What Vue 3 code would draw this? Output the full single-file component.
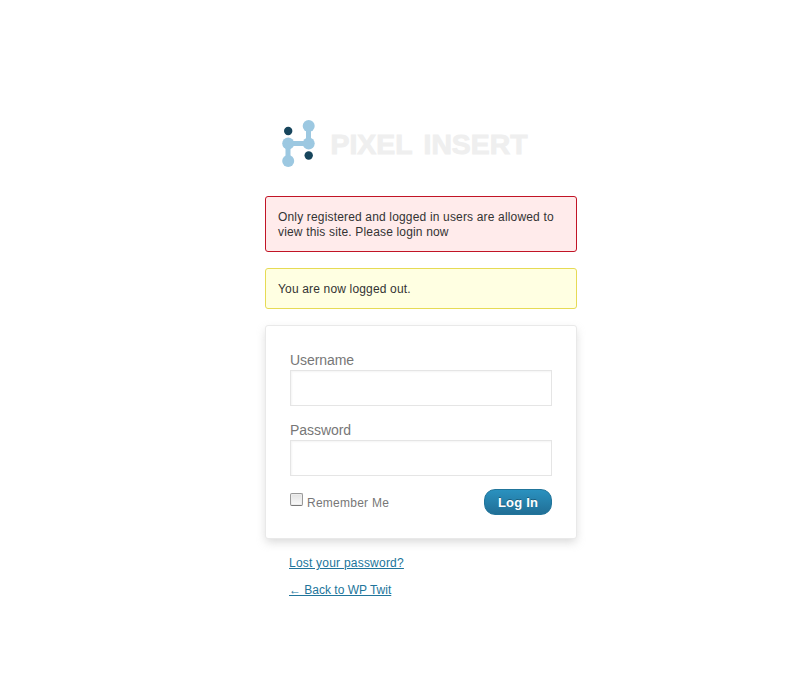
<script setup>
import { ref } from 'vue'

const username = ref('')
const password = ref('')
const remember = ref(false)
</script>

<template>
  <main class="login">
    <h1 class="brand">
      <svg class="logo" width="274" height="60" viewBox="0 0 274 60" role="img" aria-label="Pixel Insert">
        <path d="M43.500 11V28.500H23V46.500" fill="none" stroke="#9cc8e1" stroke-width="5" />
        <g fill="#9cc8e1">
          <circle cx="43.700" cy="11" r="6" />
          <circle cx="23.200" cy="28.500" r="6" />
          <circle cx="43.700" cy="28.500" r="6" />
          <circle cx="23.200" cy="46" r="6" />
        </g>
        <circle cx="23.200" cy="16" r="4.200" fill="#17455c" />
        <circle cx="43.700" cy="40.500" r="4.200" fill="#17455c" />
        <text class="wordmark" y="38.500">
          <tspan x="65.500" textLength="82" lengthAdjust="spacingAndGlyphs">PIXEL</tspan>
          <tspan x="158.500" textLength="104" lengthAdjust="spacingAndGlyphs">INSERT</tspan>
        </text>
      </svg>
    </h1>

    <div class="notice error">Only registered and logged in users are allowed to<br>view this site. Please login now</div>
    <div class="notice info">You are now logged out.</div>

    <form class="card" @submit.prevent>
      <label class="field">
        <span class="caption">Username</span>
        <input v-model="username" type="text">
      </label>
      <label class="field">
        <span class="caption">Password</span>
        <input v-model="password" type="password">
      </label>
      <div class="actions">
        <label class="remember">
          <input v-model="remember" type="checkbox">
          <span>Remember Me</span>
        </label>
        <button type="submit">Log In</button>
      </div>
    </form>

    <nav class="links">
      <a class="lost" href="#">Lost your password?</a>
      <a class="back" href="#">← Back to WP Twit</a>
    </nav>
  </main>
</template>

<style>
body {
  background: #fff;
}
</style>

<style scoped>
.login {
  width: 312px;
  margin-left: 265px;
  padding-top: 115px;
  font-family: "Liberation Sans", Arial, sans-serif;
  font-size: 12px;
  color: #333;
}
.brand {
  margin: 0 0 21px;
  height: 60px;
}
.logo {
  display: block;
}
.wordmark {
  font: bold 27.5px "Liberation Sans", Arial, sans-serif;
  fill: #efefef;
  stroke: #efefef;
  stroke-width: 0.9px;
}
.notice {
  box-sizing: border-box;
  margin-bottom: 16px;
  padding: 13px 12px 11px;
  border: 1px solid;
  border-radius: 3px;
  line-height: 15px;
  letter-spacing: 0.165px;
  white-space: nowrap;
}
.error {
  height: 56px;
  background: #ffebeb;
  border-color: #c11426;
}
.info {
  height: 41px;
  background: #ffffe2;
  border-color: #e6db55;
}
.card {
  box-sizing: border-box;
  height: 214px;
  padding: 25px 24px 0;
  border: 1px solid #e9e9e9;
  border-radius: 3px;
  background: #fff;
  box-shadow: 0 4px 10px -1px rgba(200, 200, 200, 0.7);
}
.field {
  display: block;
  height: 70px;
  color: #777;
}
.caption {
  display: block;
  height: 19px;
  font-size: 14px;
  line-height: 19px;
  letter-spacing: -0.06px;
}
.field input {
  display: block;
  box-sizing: border-box;
  width: 262px;
  height: 36px;
  margin: 0;
  padding: 3px;
  border: 1px solid #e5e5e5;
  border-radius: 0;
  background: #fff;
  box-shadow: inset 1px 1px 2px rgba(200, 200, 200, 0.2);
  font-size: 24px;
  outline: none;
}
.actions {
  display: flex;
  justify-content: space-between;
  margin-top: -2px;
}
.remember {
  display: flex;
  align-items: flex-start;
  gap: 4px;
  padding-top: 5px;
  color: #777;
}
.remember input {
  appearance: none;
  box-sizing: border-box;
  width: 13px;
  height: 13px;
  margin: -1px 0 0;
  border: 1px solid #999;
  border-bottom-color: #777;
  border-radius: 2px;
  background: linear-gradient(#e2e2e2, #fafafa);
  box-shadow: inset 0 0 0 1px #ededed;
}
.remember span {
  padding-top: 2px;
  line-height: 15px;
  letter-spacing: 0.25px;
}
button {
  width: 68px;
  height: 26px;
  margin: 0;
  padding: 1px 0 0;
  border: 1px solid #21759b;
  border-radius: 11px;
  background: linear-gradient(#2a91bf, #216f96);
  color: #fff;
  font: bold 13px "Liberation Sans", Arial, sans-serif;
  letter-spacing: 0.2px;
  text-shadow: 0 -1px 0 rgba(0, 0, 0, 0.3);
}
.links {
  display: flex;
  flex-direction: column;
  align-items: flex-start;
  gap: 12px;
  padding: 17px 0 0 24px;
  line-height: 15px;
}
.links a {
  color: #21759b;
  text-decoration: underline;
}
.lost {
  letter-spacing: 0.22px;
}
</style>
